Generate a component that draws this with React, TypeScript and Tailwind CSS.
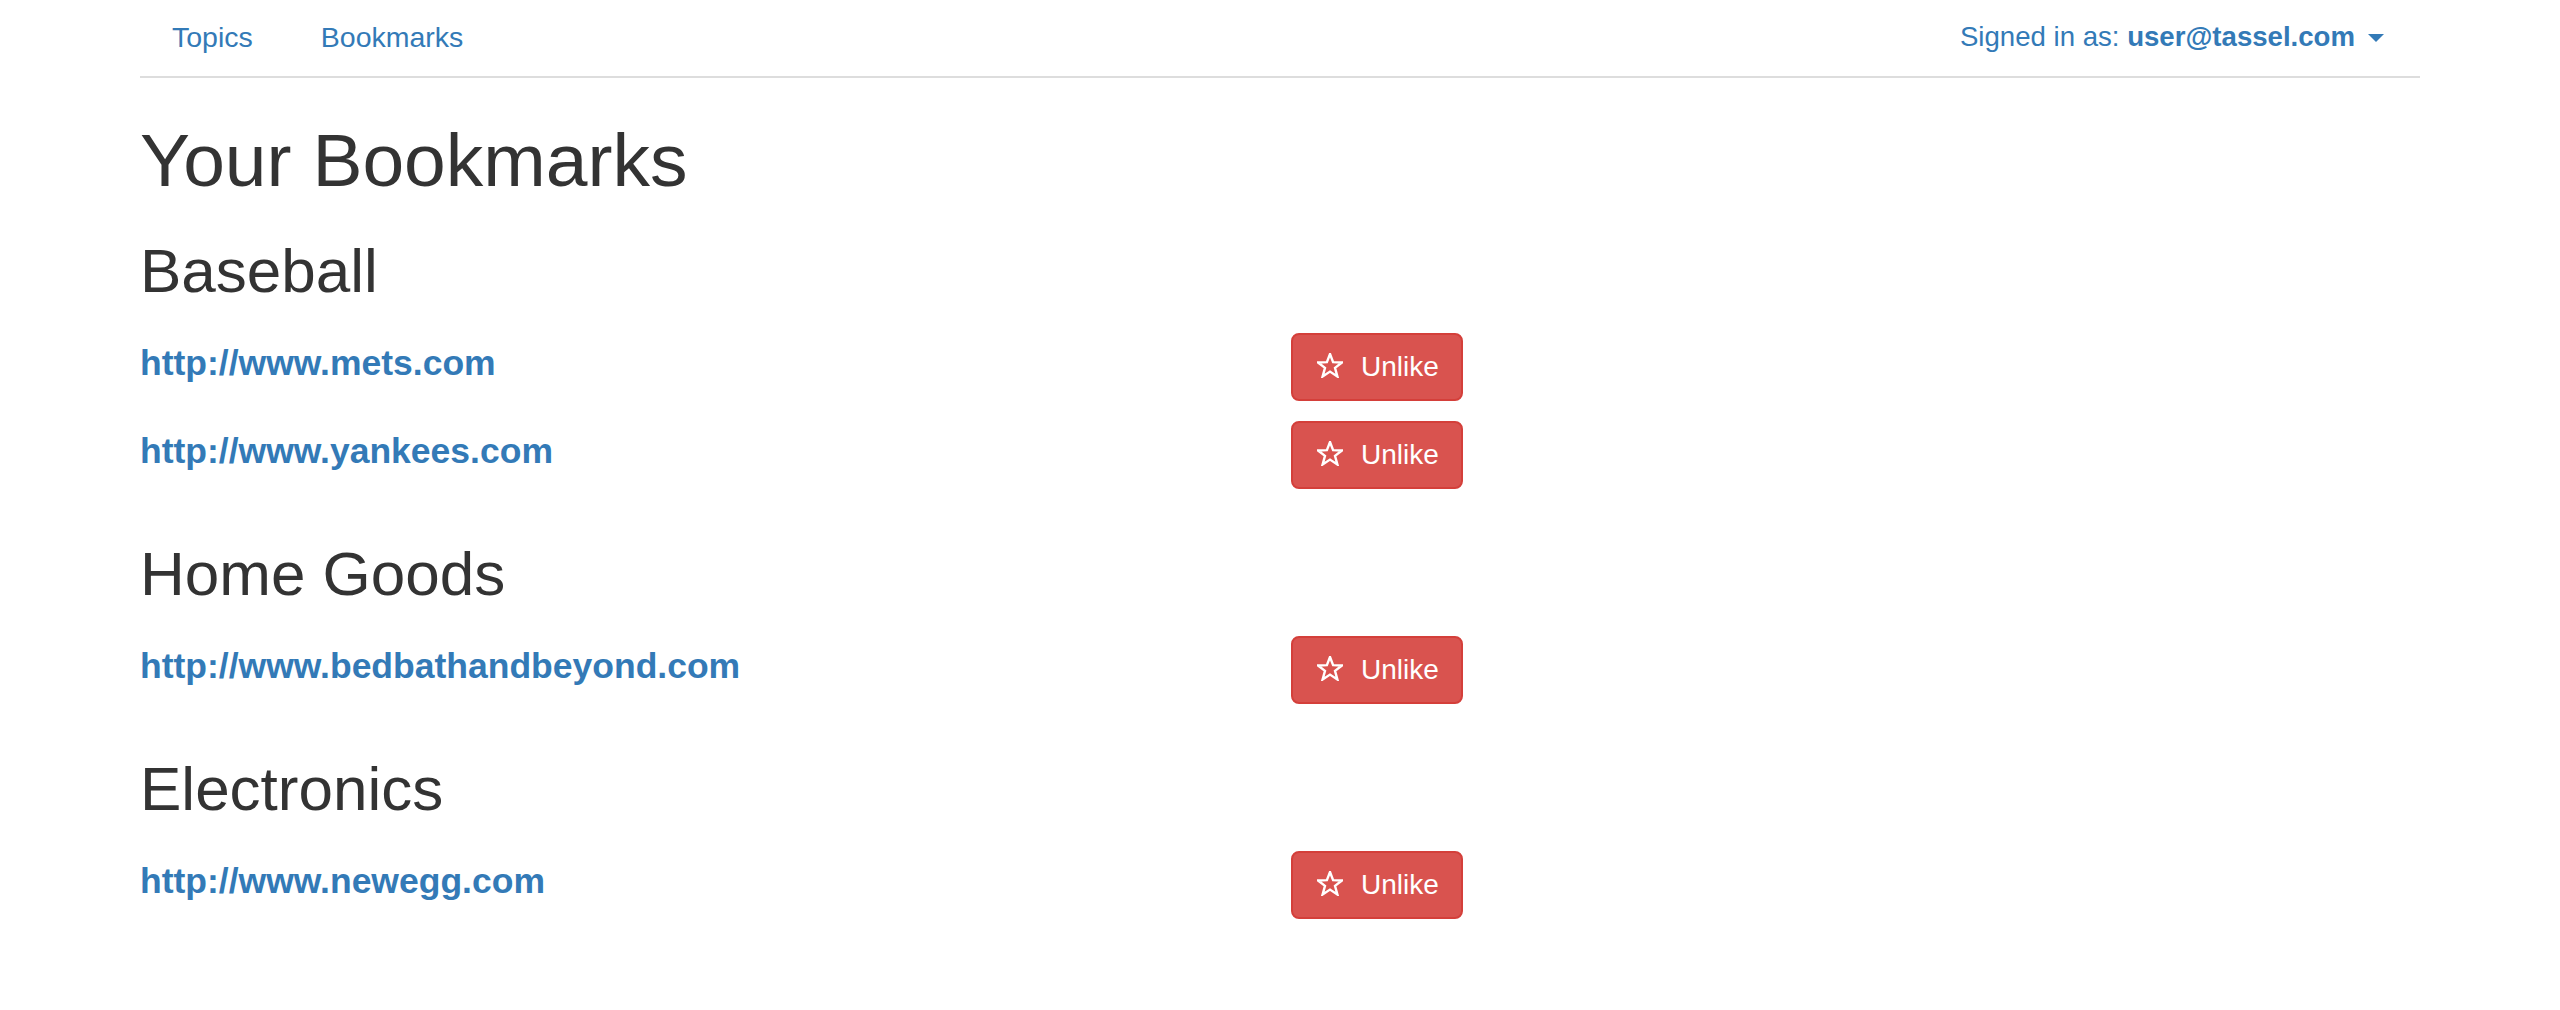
import React from "react";

const sections = [
  { title: "Baseball", links: ["http://www.mets.com", "http://www.yankees.com"] },
  { title: "Home Goods", links: ["http://www.bedbathandbeyond.com"] },
  { title: "Electronics", links: ["http://www.newegg.com"] },
];

function StarEmpty() {
  return (
    <svg width="26" height="25" viewBox="0 0 26 25" className="shrink-0 -mt-[4px]">
      <polygon
        points="13,1 16.1,9.2 24.9,9.5 18,14.9 20.4,23.5 13,18.6 5.6,23.5 8,14.9 1.1,9.5 9.9,9.2"
        fill="none"
        stroke="white"
        strokeWidth="2.4"
        strokeLinejoin="miter"
      />
    </svg>
  );
}

function UnlikeButton() {
  return (
    <button className="flex items-center gap-[18px] h-[68px] w-[172px] px-[24px] rounded-[8px] border-2 border-[#d43f3a] bg-[#d9534f] text-white text-[28px] leading-[40px]">
      <StarEmpty />
      <span>Unlike</span>
    </button>
  );
}

export default function App() {
  return (
    <div className="min-h-screen bg-white text-[#333] font-['Liberation_Sans',Arial,sans-serif]">
      <div className="ml-[140px] w-[2280px]">
        {/* Top nav */}
        <nav className="h-[78px] border-b-2 border-[#ddd] flex justify-between items-start pt-[17px] leading-[40px] text-[#337ab7]">
          <div className="flex pl-[32px] text-[28.5px]">
            <a href="#">Topics</a>
            <a href="#" className="ml-[68px]">Bookmarks</a>
          </div>
          <div className="flex items-center pr-[36px] text-[27.6px]">
            <span>
              Signed in as: <span className="font-bold">user@tassel.com</span>
            </span>
            <span className="ml-[13px] mt-[2px] w-0 h-0 border-x-[8px] border-t-[8px] border-x-transparent border-t-[#337ab7]" />
          </div>
        </nav>

        <h1 className="mt-[42px] text-[75px] leading-[80px]">Your Bookmarks</h1>

        {sections.map((s) => (
          <section key={s.title} className="mt-[32px] first-of-type:mt-[38px]">
            <h2 className="text-[62px] leading-[66px]">{s.title}</h2>
            <div className="mt-[29px]">
              {s.links.map((l) => (
                <div key={l} className="flex items-start h-[88px]">
                  <div className="w-[1151px] pt-[10px]">
                    <a href="#" className="text-[35.5px] leading-[40px] font-bold text-[#337ab7]">
                      {l}
                    </a>
                  </div>
                  <UnlikeButton />
                </div>
              ))}
            </div>
          </section>
        ))}
      </div>
    </div>
  );
}
